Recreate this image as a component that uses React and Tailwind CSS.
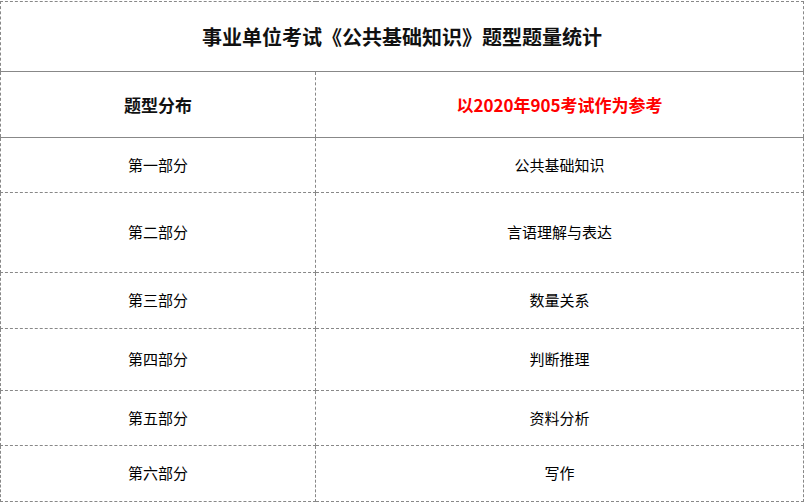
export default function App() {
  const rows = [
    ['第一部分', '公共基础知识', 'h-[55px]'],
    ['第二部分', '言语理解与表达', 'h-[80px]'],
    ['第三部分', '数量关系', 'h-[56px]'],
    ['第四部分', '判断推理', 'h-[62px]'],
    ['第五部分', '资料分析', 'h-[55px]'],
    ['第六部分', '写作', 'h-[56px]'],
  ];

  return (
    <div className="w-[806px] h-[503px] bg-white pt-px font-['Noto_Sans_CJK_SC','Microsoft_YaHei',sans-serif] text-[#111]">
      <table className="w-[804px] border-collapse table-fixed">
        <colgroup>
          <col className="w-[315px]" />
          <col />
        </colgroup>
        <tbody>
          <tr className="h-[70px]">
            <td
              colSpan={2}
              className="border border-dashed border-[#888] text-center text-[20px] font-bold"
              style={{ borderBottomStyle: 'solid' }}
            >
              事业单位考试《公共基础知识》题型题量统计
            </td>
          </tr>
          <tr className="h-[66px]">
            <td
              className="border border-dashed border-[#888] text-center text-[17px] font-bold"
              style={{ borderBottomStyle: 'solid' }}
            >
              题型分布
            </td>
            <td
              className="border border-dashed border-[#888] text-center text-[17px] font-bold text-[#ff0000]"
              style={{ borderBottomStyle: 'solid' }}
            >
              以2020年905考试作为参考
            </td>
          </tr>
          {rows.map(([a, b, h]) => (
            <tr key={a} className={h}>
              <td className="border border-dashed border-[#888] text-center text-[15px] text-black">{a}</td>
              <td className="border border-dashed border-[#888] text-center text-[15px] text-black">{b}</td>
            </tr>
          ))}
        </tbody>
      </table>
    </div>
  );
}
